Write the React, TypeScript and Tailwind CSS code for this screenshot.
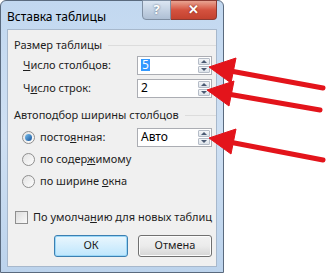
const font = { fontFamily: '"Noto Sans", "Open Sans", sans-serif' };

const Spinner = ({ value, focused }: { value: string; focused?: boolean }) => (
  <div className="flex h-[19px] w-[75px] border border-[#abadb3] bg-white">
    <div className="flex flex-1 items-center pl-[3px] text-[12px] leading-none text-black">
      {focused ? <span className="bg-[#3399ff] px-[1px] text-white">{value}</span> : value}
    </div>
    <div className="flex w-[14px] flex-col gap-[1px] p-[1px]">
      <div className="flex flex-1 items-center justify-center rounded-[1px] border border-[#b5bcc7] bg-gradient-to-b from-[#f4f6f8] to-[#dde3ea]">
        <div className="h-0 w-0 border-x-[3px] border-b-[3px] border-x-transparent border-b-[#4b5a73]" />
      </div>
      <div className="flex flex-1 items-center justify-center rounded-[1px] border border-[#b5bcc7] bg-gradient-to-b from-[#f4f6f8] to-[#dde3ea]">
        <div className="h-0 w-0 border-x-[3px] border-t-[3px] border-x-transparent border-t-[#4b5a73]" />
      </div>
    </div>
  </div>
);

const Radio = ({ checked, children }: { checked?: boolean; children: React.ReactNode }) => (
  <div className="flex h-[22px] items-center gap-[5px]">
    <div className="flex h-[13px] w-[13px] items-center justify-center rounded-full border border-[#8f8f8f] bg-gradient-to-br from-[#e3e3e3] to-[#fdfdfd]">
      {checked && <div className="h-[7px] w-[7px] rounded-full bg-gradient-to-br from-[#7cc1ee] to-[#11539b]" />}
    </div>
    <span className="whitespace-nowrap">{children}</span>
  </div>
);

const Group = ({ title }: { title: string }) => (
  <div className="flex h-[16px] items-center gap-[6px] pl-[6px]">
    <span className="whitespace-nowrap">{title}</span>
    <div className="h-px flex-1 bg-[#dcdcdc]" />
  </div>
);

export default function App() {
  return (
    <div className="relative h-[273px] w-[328px] overflow-hidden bg-white text-[11px] text-[#1e1e1e]" style={font}>
      <div className="flex h-[273px] w-[224px] flex-col rounded-t-[6px] border border-[#5a6a7e] bg-gradient-to-b from-[#c2d8f0] via-[#cfe0f3] to-[#bcd3ec] px-[6px]">
        <div className="flex h-[28px] items-start">
          <span className="pt-[7px] text-[12px] text-black">Вставка таблицы</span>
          <div className="ml-auto flex h-[20px] -mt-px">
            <div className="flex w-[29px] items-center justify-center rounded-bl-[4px] border border-[#7f8fa3] bg-gradient-to-b from-[#dbe6f3] to-[#aebfd4] text-[13px] font-bold text-white [text-shadow:0_0_2px_#4a5a70]">?</div>
            <div className="flex w-[46px] items-center justify-center rounded-br-[4px] border border-l-0 border-[#8b3a32] bg-gradient-to-b from-[#e8a392] via-[#d4523f] to-[#c3422f] text-[13px] font-bold text-white [text-shadow:0_0_2px_#6b1d14]">✕</div>
          </div>
        </div>
        <div className="flex h-[238px] flex-col border border-[#a7b8cc] bg-[#f0f0f0] pt-[7px]">
          <Group title="Размер таблицы" />
          <div className="mt-[2px] flex h-[20px] items-center justify-between pl-[15px] pr-[4px]">
            <span className="whitespace-nowrap"><u>Ч</u>исло столбцов:</span>
            <Spinner value="5" focused />
          </div>
          <div className="mt-[3px] flex h-[20px] items-center justify-between pl-[15px] pr-[4px]">
            <span className="whitespace-nowrap">Ч<u>и</u>сло строк:</span>
            <Spinner value="2" />
          </div>
          <div className="mt-[9px]">
            <Group title="Автоподбор ширины столбцов" />
          </div>
          <div className="flex flex-col pl-[14px] pt-[3px]">
            <div className="flex items-center justify-between pr-[4px]">
              <Radio checked>посто<u>я</u>нная:</Radio>
              <Spinner value="Авто" />
            </div>
            <Radio>по содер<u>ж</u>имому</Radio>
            <Radio>по ширине <u>о</u>кна</Radio>
          </div>
          <div className="mt-[17px] flex items-center gap-[5px] pl-[7px]">
            <div className="h-[13px] w-[13px] border border-[#8f8f8f] bg-gradient-to-br from-[#dcdcdc] to-[#fafafa]" />
            <span className="whitespace-nowrap">По умолча<u>н</u>ию для новых таблиц</span>
          </div>
          <div className="mt-[9px] flex justify-end gap-[10px] pr-[4px]">
            <div className="flex h-[22px] w-[74px] items-center justify-center rounded-[3px] border border-[#3c7fb1] bg-gradient-to-b from-[#eaf6fd] to-[#bee6fd] shadow-[inset_0_0_0_1px_#9ad7f8]">ОК</div>
            <div className="flex h-[22px] w-[74px] items-center justify-center rounded-[3px] border border-[#707070] bg-gradient-to-b from-[#f2f2f2] via-[#ebebeb] to-[#d5d5d5] shadow-[inset_0_0_0_1px_#fcfcfc]">Отмена</div>
          </div>
        </div>
      </div>
      <svg className="pointer-events-none absolute left-0 top-0" width="328" height="273">
        <g fill="#e3141b" stroke="#e3141b">
          <line x1="323" y1="88" x2="225" y2="70" strokeWidth="5" strokeLinecap="round" />
          <polygon points="209,67 236,58 231,83" />
          <line x1="320" y1="110" x2="222" y2="93" strokeWidth="5" strokeLinecap="round" />
          <polygon points="207,90 234,81 229,106" />
          <line x1="323" y1="160" x2="224" y2="141" strokeWidth="5" strokeLinecap="round" />
          <polygon points="209,138 236,129 231,154" />
        </g>
      </svg>
    </div>
  );
}
